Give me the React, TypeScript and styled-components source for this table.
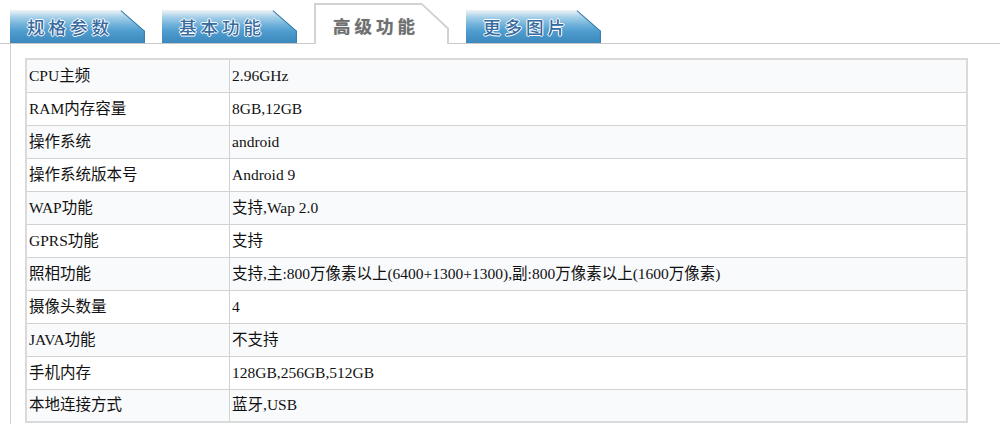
import React from "react";
import styled, { createGlobalStyle, css } from "styled-components";

const Global = createGlobalStyle`
  html, body { margin: 0; padding: 0; background: #fff; }
  body { width: 1000px; height: 424px; overflow: hidden; }
`;

const Page = styled.div`
  width: 1000px;
  height: 424px;
  overflow: hidden;
  padding-top: 3px;
  box-sizing: border-box;
`;

const TabBar = styled.div`
  display: flex;
  align-items: flex-end;
  gap: 17px;
  padding-left: 10px;
  height: 40px;
  border-bottom: 1px solid #c9c9c9;
`;

const tabFont = css`
  font-family: "Noto Sans CJK SC", "Noto Sans", sans-serif;
  font-size: 17.5px;
  letter-spacing: 4px;
  line-height: 1;
`;

const Tab = styled.div`
  position: relative;
  width: 135px;
  height: 33px;
  box-sizing: border-box;
  padding: 8px 0 0 17px;
  clip-path: polygon(0 0, 111px 0, 100% 21px, 100% 100%, 0 100%);
  background: linear-gradient(
    180deg,
    #eef3f6 0%,
    #d3e6f1 9%,
    #a4cfe8 22%,
    #76b5dc 42%,
    #519fd0 62%,
    #4593c6 82%,
    #3b87bc 100%
  );
  ${tabFont};
  font-weight: 500;
  color: #356ba0;
  text-shadow: 0 0 1px #fff, 1px 0 0 #fff, -1px 0 0 #fff, 0 1px 0 #fff, 0 -1px 0 #fff;
`;

const SlantEdge = styled.div`
  position: absolute;
  right: 0;
  top: 0;
  width: 135px;
  height: 33px;
  pointer-events: none;
`;

const ActiveOuter = styled.div`
  width: 135px;
  height: 41px;
  margin-bottom: -1px;
  background: #d2d2d2;
  clip-path: polygon(0 0, 108px 0, 100% 25px, 100% 100%, 0 100%);
  box-sizing: border-box;
  padding: 2px 2px 0 2px;
`;

const ActiveInner = styled.div`
  height: 100%;
  background: #fff;
  clip-path: polygon(0 0, 105.5px 0, 100% 24px, 100% 100%, 0 100%);
  box-sizing: border-box;
  padding: 12px 0 0 17px;
  ${tabFont};
  font-weight: 700;
  color: #6f6f6f;
  text-shadow: 0 0 1px #aaa;
`;

const Content = styled.div`
  margin-left: 10px;
  border-left: 1px solid #cfcfcf;
  padding: 14px 0 0 14px;
  height: 366px;
  overflow: hidden;
`;

const Table = styled.table`
  border-collapse: collapse;
  width: 943px;
  border: 2px solid #dadada;
  font-family: "Liberation Serif", "Noto Sans CJK SC", serif;
  font-size: 15.5px;
  color: #111;
`;

const Row = styled.tr<{ $alt: boolean }>`
  height: 33px;
  background: ${(p) => (p.$alt ? "#f9fafc" : "#ffffff")};
`;

const Cell = styled.td<{ $label?: boolean }>`
  border: 1px solid #d2d2d2;
  padding: 0 2px;
  vertical-align: middle;
  width: ${(p) => (p.$label ? "198px" : "auto")};
  line-height: 20px;
  white-space: nowrap;
`;

const tabs = ["规格参数", "基本功能", "高级功能", "更多图片"];
const active = 2;

const rows: [string, string][] = [
  ["CPU主频", "2.96GHz"],
  ["RAM内存容量", "8GB,12GB"],
  ["操作系统", "android"],
  ["操作系统版本号", "Android 9"],
  ["WAP功能", "支持,Wap 2.0"],
  ["GPRS功能", "支持"],
  ["照相功能", "支持,主:800万像素以上(6400+1300+1300),副:800万像素以上(1600万像素)"],
  ["摄像头数量", "4"],
  ["JAVA功能", "不支持"],
  ["手机内存", "128GB,256GB,512GB"],
  ["本地连接方式", "蓝牙,USB"],
];

export default function App() {
  return (
    <Page>
      <Global />
      <TabBar>
        {tabs.map((t, i) =>
          i === active ? (
            <ActiveOuter key={t}>
              <ActiveInner>{t}</ActiveInner>
            </ActiveOuter>
          ) : (
            <Tab key={t}>
              {t}
              <SlantEdge>
                <svg width="135" height="33" viewBox="0 0 135 33">
                  <polyline
                    points="111,0.5 134.5,21 134.5,33"
                    fill="none"
                    stroke="#3f80ad"
                    strokeWidth="1.5"
                  />
                </svg>
              </SlantEdge>
            </Tab>
          )
        )}
      </TabBar>
      <Content>
        <Table>
          <tbody>
            {rows.map(([k, v], i) => (
              <Row key={k} $alt={i % 2 === 0}>
                <Cell $label>{k}</Cell>
                <Cell>{v}</Cell>
              </Row>
            ))}
          </tbody>
        </Table>
      </Content>
    </Page>
  );
}
